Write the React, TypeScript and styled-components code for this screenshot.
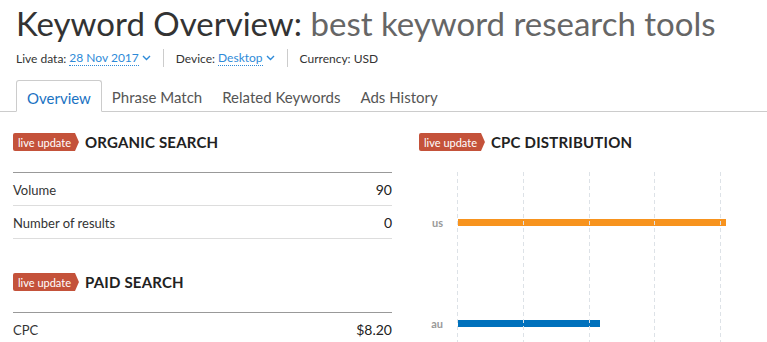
import React from 'react';
import styled, { createGlobalStyle } from 'styled-components';

const theme = {
  text: '#333333',
  muted: '#666666',
  link: '#2e8ad8',
  tabActive: '#1a72c2',
  badge: '#c4523a',
  orange: '#f7931e',
  blue: '#0071bc',
  font: "'Lato', 'Open Sans', sans-serif",
};

const GlobalStyle = createGlobalStyle`
  html, body {
    margin: 0;
    padding: 0;
    background: #ffffff;
    overflow: hidden;
  }
  body {
    font-family: ${theme.font};
    color: ${theme.text};
  }
`;

const Page = styled.div`
  width: 800px;
`;

const Header = styled.header`
  padding: 0 16px;
`;

const Title = styled.h1`
  margin: 0;
  padding-top: 4px;
  font-size: 33px;
  line-height: 38px;
  font-weight: 400;
  color: ${theme.text};
  white-space: nowrap;

  span {
    color: ${theme.muted};
  }
`;

const Meta = styled.div`
  display: flex;
  align-items: center;
  margin-top: 7px;
  height: 18px;
  font-size: 12px;
`;

const MetaItem = styled.div<{ $first?: boolean }>`
  display: flex;
  align-items: center;
  gap: 3px;
  padding: 0 12px;
  height: 18px;
  ${(p) => (p.$first ? 'padding-left: 0;' : 'border-left: 1px solid #cccccc;')}
`;

const MetaLink = styled.span`
  color: ${theme.link};
  border-bottom: 1px dotted ${theme.link};
  line-height: 14px;
`;

const TabBar = styled.nav`
  display: flex;
  margin-top: 13px;
  padding-left: 16px;
  border-bottom: 1px solid #cccccc;
  height: 31px;
`;

const Tab = styled.div<{ $active?: boolean }>`
  display: flex;
  align-items: center;
  padding: 3px 10px 0;
  height: 31px;
  box-sizing: border-box;
  font-size: 15px;
  color: ${(p) => (p.$active ? theme.tabActive : '#555555')};
  ${(p) =>
    p.$active
      ? `
    border: 1px solid #cccccc;
    border-bottom: 1px solid #ffffff;
    border-radius: 3px 3px 0 0;
    background: #ffffff;
    margin-bottom: -1px;
    height: 32px;
    padding: 4px 10px 0;
  `
      : ''}
`;

const Content = styled.main`
  display: grid;
  grid-template-columns: 379px 1fr;
  column-gap: 27px;
  padding: 21px 13px 0;
`;

const Column = styled.section`
  display: flex;
  flex-direction: column;
`;

const SectionHead = styled.div<{ $spaced?: boolean }>`
  display: flex;
  align-items: center;
  gap: 6px;
  height: 18px;
  margin-top: ${(p) => (p.$spaced ? '34px' : '0')};
  margin-bottom: 21px;
`;

const Badge = styled.span`
  display: inline-flex;
  align-items: center;
  height: 18px;
  padding: 0 8px 0 5px;
  background: ${theme.badge};
  color: #ffffff;
  font-size: 11px;
  border-radius: 2px 0 0 2px;
  clip-path: polygon(0 0, calc(100% - 4px) 0, 100% 50%, calc(100% - 4px) 100%, 0 100%);
`;

const SectionTitle = styled.h2`
  margin: 0;
  font-size: 15px;
  font-weight: 700;
  color: #222222;
  letter-spacing: 0.2px;
`;

const Table = styled.div`
  border-top: 1px solid #999999;
`;

const Row = styled.div`
  display: flex;
  justify-content: space-between;
  align-items: center;
  height: 31px;
  padding-top: 1px;
  border-bottom: 1px solid #dddddd;
  font-size: 13px;
`;

const Value = styled.span`
  color: #222222;
  font-size: 14px;
`;

const Chart = styled.div`
  position: relative;
  display: flex;
  flex-direction: column;
`;

const Grid = styled.svg`
  position: absolute;
  left: 38px;
  top: 0;
  width: 300px;
  height: 200px;
  pointer-events: none;
`;

const ChartRow = styled.div`
  display: flex;
  align-items: center;
  height: 101px;
`;

const CountryLabel = styled.span`
  width: 24px;
  text-align: right;
  font-size: 11px;
  font-weight: 700;
  color: #999999;
  margin-right: 15px;
`;

const Bar = styled.div<{ $color: string }>`
  height: 7px;
  background: ${(p) => p.$color};
`;

const Chevron = () => (
  <svg width="9" height="6" viewBox="0 0 9 6">
    <path d="M1 1l3.5 3.5L8 1" fill="none" stroke={theme.link} strokeWidth="1.4" />
  </svg>
);

const LiveUpdate = () => <Badge>live update</Badge>;

const organic = [
  { label: 'Volume', value: '90' },
  { label: 'Number of results', value: '0' },
];

const paid = [{ label: 'CPC', value: '$8.20' }];

const cpc = [
  { country: 'us', width: 268, color: theme.orange },
  { country: 'au', width: 142, color: theme.blue },
];

const gridX = [0.5, 66.5, 132.5, 197.5, 263.5];

const App: React.FC = () => {
  return (
    <Page>
      <GlobalStyle />
      <Header>
        <Title>
          Keyword Overview: <span>best keyword research tools</span>
        </Title>
        <Meta>
          <MetaItem $first>
            Live data: <MetaLink>28 Nov 2017</MetaLink>
            <Chevron />
          </MetaItem>
          <MetaItem>
            Device: <MetaLink>Desktop</MetaLink>
            <Chevron />
          </MetaItem>
          <MetaItem>Currency: USD</MetaItem>
        </Meta>
      </Header>
      <TabBar>
        <Tab $active>Overview</Tab>
        <Tab>Phrase Match</Tab>
        <Tab>Related Keywords</Tab>
        <Tab>Ads History</Tab>
      </TabBar>
      <Content>
        <Column>
          <SectionHead>
            <LiveUpdate />
            <SectionTitle>ORGANIC SEARCH</SectionTitle>
          </SectionHead>
          <Table>
            {organic.map((r) => (
              <Row key={r.label}>
                <span>{r.label}</span>
                <Value>{r.value}</Value>
              </Row>
            ))}
          </Table>
          <SectionHead $spaced>
            <LiveUpdate />
            <SectionTitle>PAID SEARCH</SectionTitle>
          </SectionHead>
          <Table>
            {paid.map((r) => (
              <Row key={r.label}>
                <span>{r.label}</span>
                <Value>{r.value}</Value>
              </Row>
            ))}
          </Table>
        </Column>
        <Column>
          <SectionHead>
            <LiveUpdate />
            <SectionTitle>CPC DISTRIBUTION</SectionTitle>
          </SectionHead>
          <Chart>
            <Grid viewBox="0 0 300 200">
              {gridX.map((x) => (
                <line key={x} x1={x} y1={0} x2={x} y2={200} stroke="#dde2e7" strokeDasharray="4 3" />
              ))}
            </Grid>
            {cpc.map((c) => (
              <ChartRow key={c.country}>
                <CountryLabel>{c.country}</CountryLabel>
                <Bar $color={c.color} style={{ width: c.width }} />
              </ChartRow>
            ))}
          </Chart>
        </Column>
      </Content>
    </Page>
  );
};

export default App;
